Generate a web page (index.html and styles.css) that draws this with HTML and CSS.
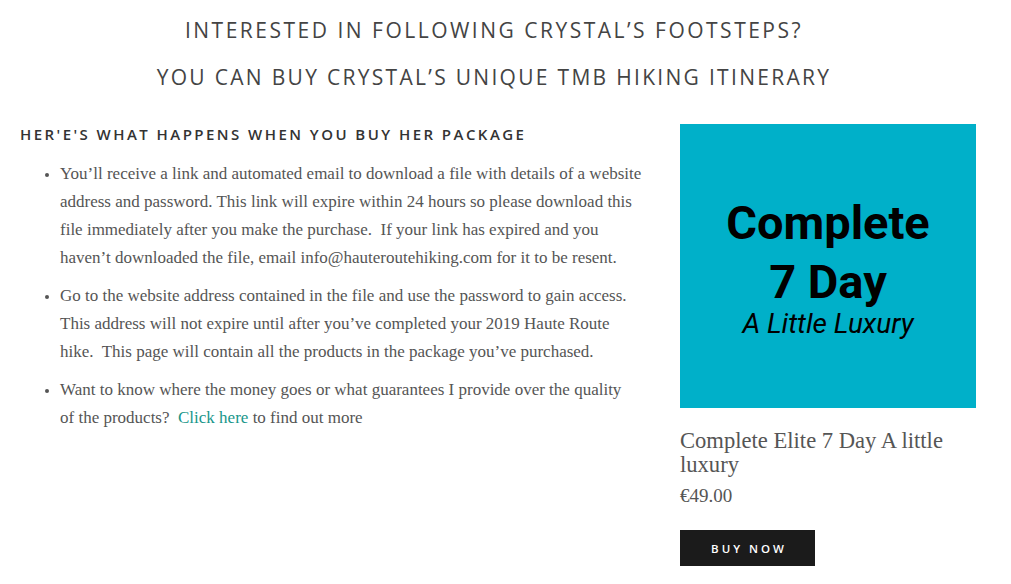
FILE: index.html
```html
<!DOCTYPE html>
<html>
<head>
<meta charset="utf-8">
<link rel="stylesheet" href="styles.css">
</head>
<body>
<header class="intro">
  <h1 class="title">INTERESTED IN FOLLOWING CRYSTAL’S FOOTSTEPS?</h1>
  <h1 class="title second">YOU CAN BUY CRYSTAL’S UNIQUE TMB HIKING ITINERARY</h1>
</header>
<main class="content">
  <section class="info">
    <h3 class="subhead">HER'E'S WHAT HAPPENS WHEN YOU BUY HER PACKAGE</h3>
    <ul class="steps">
      <li>You’ll receive a link and automated email to download a file with details of a website address and password. This link will expire within 24 hours so please download this file immediately after you make the purchase.&nbsp; If your link has expired and you haven’t downloaded the file, email info@hauteroutehiking.com for it to be resent.</li>
      <li>Go to the website address contained in the file and use the password to gain access. This address will not expire until after you’ve completed your 2019 Haute Route hike.&nbsp; This page will contain all the products in the package you’ve purchased.</li>
      <li>Want to know where the money goes or what guarantees I provide over the quality of&nbsp;the products?&nbsp; <a class="link" href="#">Click here</a> to find out more</li>
    </ul>
  </section>
  <aside class="product">
    <div class="cover">
      <div class="cover-big">Complete</div>
      <div class="cover-big">7 Day</div>
      <div class="cover-small">A Little Luxury</div>
    </div>
    <div class="product-name">Complete Elite 7 Day A little luxury</div>
    <div class="price">€49.00</div>
    <button class="buy">BUY NOW</button>
  </aside>
</main>
</body>
</html>
```
FILE: styles.css
```css
* { box-sizing: border-box; }
body {
  margin: 0;
  background: #fff;
  font-family: "Liberation Serif", serif;
  color: #555;
}
.intro {
  text-align: center;
  padding: 16px 23px 0 0;
}
.title {
  margin: 0;
  font-family: "Open Sans", "Noto Sans", sans-serif;
  font-weight: 400;
  font-size: 21px;
  letter-spacing: 2.5px;
  line-height: 28px;
  color: #444;
}
.title.second {
  margin-top: 19px;
  letter-spacing: 2.3px;
}
.content {
  display: flex;
  padding: 33px 35px 0 20px;
  gap: 30px;
}
.info {
  flex: 1;
}
.subhead {
  margin: 0 0 16px;
  font-family: "Open Sans", "Noto Sans", sans-serif;
  font-weight: 600;
  font-size: 15px;
  letter-spacing: 2.45px;
  color: #333;
  line-height: 20px;
}
.steps {
  margin: 0;
  padding-left: 40px;
  font-size: 17px;
  line-height: 28px;
  color: #555;
}
.steps li {
  margin-bottom: 10px;
}
.steps li::marker { font-size: 13px; }
.link {
  color: #17968a;
  text-decoration: none;
}
.product {
  width: 296px;
  flex: none;
}
.cover {
  width: 296px;
  height: 284px;
  background: #00b0c9;
  display: flex;
  flex-direction: column;
  align-items: center;
  justify-content: center;
  font-family: Roboto, sans-serif;
  color: #000;
}
.cover-big {
  font-size: 47px;
  font-weight: 700;
  line-height: 59px;
}
.cover-small {
  font-size: 28px;
  font-style: italic;
  line-height: 32px;
  margin-top: -3px;
}
.product-name {
  margin-top: 21px;
  font-size: 22.6px;
  line-height: 24px;
  color: #555;
}
.price {
  margin-top: 7px;
  font-size: 19px;
  line-height: 24px;
  color: #555;
}
.buy {
  margin-top: 22px;
  width: 135px;
  height: 36px;
  border: none;
  background: #1b1b1b;
  color: #fff;
  font-family: "Open Sans", sans-serif;
  font-weight: 600;
  font-size: 11.5px;
  letter-spacing: 3px;
  padding: 0 0 0 3px;
}
```
